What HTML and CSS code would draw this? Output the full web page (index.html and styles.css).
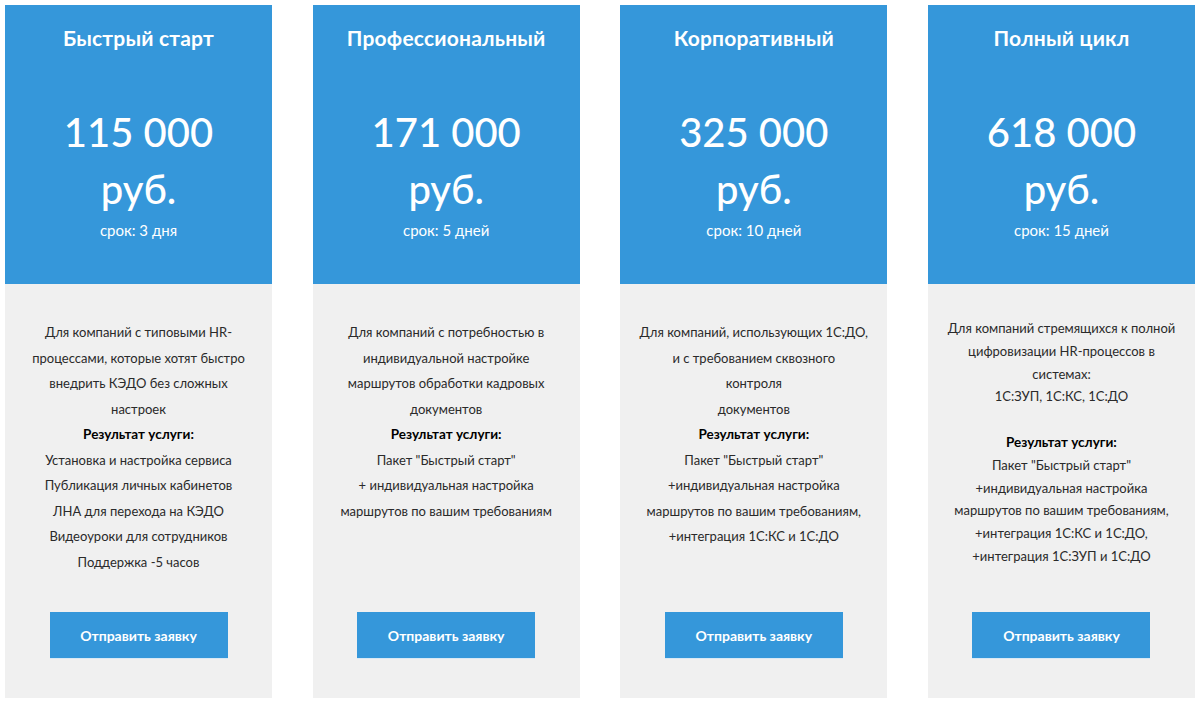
FILE: index.html
```html
<!DOCTYPE html>
<html lang="ru">
<head>
<meta charset="utf-8">
<title>Тарифы</title>
<link rel="stylesheet" href="styles.css">
</head>
<body>
<div class="plans">
  <div class="card">
    <div class="head">
      <div class="title">Быстрый старт</div>
      <div class="price">115 000<br>руб.</div>
      <div class="term">срок: 3 дня</div>
    </div>
    <div class="body">
      <p class="text">Для компаний с типовыми HR-<br>процессами, которые хотят быстро<br>внедрить КЭДО без сложных<br>настроек<br><b>Результат услуги:</b><br>Установка и настройка сервиса<br>Публикация личных кабинетов<br>ЛНА для перехода на КЭДО<br>Видеоуроки для сотрудников<br>Поддержка -5 часов</p>
      <a class="btn" href="#">Отправить заявку</a>
    </div>
  </div>
  <div class="card">
    <div class="head">
      <div class="title">Профессиональный</div>
      <div class="price">171 000<br>руб.</div>
      <div class="term">срок: 5 дней</div>
    </div>
    <div class="body">
      <p class="text">Для компаний с потребностью в<br>индивидуальной настройке<br>маршрутов обработки кадровых<br>документов<br><b>Результат услуги:</b><br>Пакет "Быстрый старт"<br>+ индивидуальная настройка<br>маршрутов по вашим требованиям</p>
      <a class="btn" href="#">Отправить заявку</a>
    </div>
  </div>
  <div class="card">
    <div class="head">
      <div class="title">Корпоративный</div>
      <div class="price">325 000<br>руб.</div>
      <div class="term">срок: 10 дней</div>
    </div>
    <div class="body">
      <p class="text">Для компаний, использующих 1С:ДО,<br>и с требованием сквозного<br>контроля<br>документов<br><b>Результат услуги:</b><br>Пакет "Быстрый старт"<br>+индивидуальная настройка<br>маршрутов по вашим требованиям,<br>+интеграция 1С:КС и 1С:ДО</p>
      <a class="btn" href="#">Отправить заявку</a>
    </div>
  </div>
  <div class="card">
    <div class="head">
      <div class="title">Полный цикл</div>
      <div class="price">618 000<br>руб.</div>
      <div class="term">срок: 15 дней</div>
    </div>
    <div class="body">
      <p class="text text-tight">Для компаний стремящихся к полной<br>цифровизации HR-процессов в<br>системах:<br>1С:ЗУП, 1С:КС, 1С:ДО<br><br><b>Результат услуги:</b><br>Пакет "Быстрый старт"<br>+индивидуальная настройка<br>маршрутов по вашим требованиям,<br>+интеграция 1С:КС и 1С:ДО,<br>+интеграция 1С:ЗУП и 1С:ДО</p>
      <a class="btn" href="#">Отправить заявку</a>
    </div>
  </div>
</div>
</body>
</html>
```
FILE: styles.css
```css
html, body {
  margin: 0;
  padding: 0;
  background: #ffffff;
}
body {
  font-family: Lato, "Noto Sans", "DejaVu Sans", sans-serif;
  color: #2a2a2a;
}
.plans {
  display: grid;
  grid-template-columns: repeat(4, 267px);
  column-gap: 40.67px;
  padding: 5px 0 0 5px;
}
.card {
  display: flex;
  flex-direction: column;
  height: 693px;
  background: #f0f0f0;
}
.head {
  height: 279px;
  box-sizing: border-box;
  background: #3597da;
  color: #ffffff;
  text-align: center;
  padding-top: 21px;
}
.title {
  font-size: 21px;
  font-weight: 700;
  line-height: 24px;
  letter-spacing: 0.2px;
}
.price {
  margin-top: 54px;
  font-size: 40px;
  font-weight: 500;
  line-height: 57px;
}
.term {
  margin-top: 2px;
  font-size: 15px;
  font-weight: 400;
  line-height: 20px;
}
.body {
  flex: 1;
  display: flex;
  flex-direction: column;
  align-items: center;
  padding: 36px 10px 40px;
}
.text {
  margin: 0;
  text-align: center;
  font-size: 13px;
  line-height: 25.5px;
  white-space: nowrap;
}
.text b {
  color: #000;
  font-weight: 700;
  font-size: 13.5px;
}
.text-tight {
  line-height: 22.8px;
  margin-top: -3px;
}
.btn {
  margin-top: auto;
  display: flex;
  align-items: center;
  justify-content: center;
  width: 178px;
  height: 46px;
  background: #3597da;
  color: #ffffff;
  font-size: 14px;
  font-weight: 700;
  text-decoration: none;
  box-shadow: 0 1px 0 #d9e9f5;
}
```
